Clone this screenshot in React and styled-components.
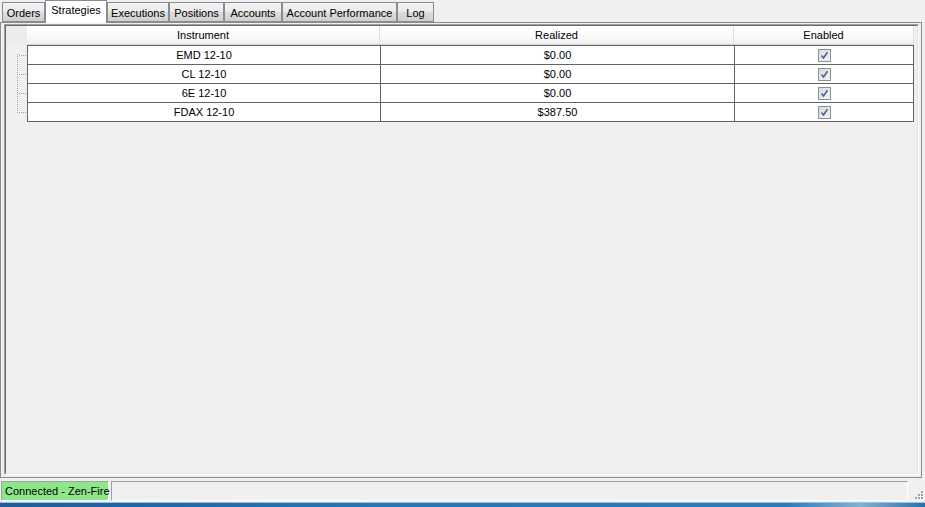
import styled, { createGlobalStyle } from "styled-components";

const GlobalStyle = createGlobalStyle`
  html, body {
    margin: 0;
    padding: 0;
    background: #f0f0f0;
  }
  body {
    font-family: "Liberation Sans", Arial, sans-serif;
    font-size: 11px;
    color: #000;
  }
`;

const strategies = [
  { id: 1, instrument: "EMD 12-10", realized: "$0.00", enabled: true },
  { id: 2, instrument: "CL 12-10", realized: "$0.00", enabled: true },
  { id: 3, instrument: "6E 12-10", realized: "$0.00", enabled: true },
  { id: 4, instrument: "FDAX 12-10", realized: "$387.50", enabled: true },
];

const tabs = [
  { label: "Orders", width: 43 },
  { label: "Strategies", width: 62, active: true },
  { label: "Executions", width: 62 },
  { label: "Positions", width: 55 },
  { label: "Accounts", width: 58 },
  { label: "Account Performance", width: 115 },
  { label: "Log", width: 37 },
];

const Window = styled.div`
  width: 925px;
  height: 507px;
  display: flex;
  flex-direction: column;
  background: #f0f0f0;
  overflow: hidden;
`;

const TabStrip = styled.div`
  height: 22px;
  display: flex;
  align-items: flex-end;
  padding-left: 2px;
  position: relative;
  z-index: 1;
`;

const Tab = styled.div`
  box-sizing: border-box;
  width: ${(p) => p.$width}px;
  height: ${(p) => (p.$active ? 23 : 20)}px;
  margin-bottom: ${(p) => (p.$active ? -1 : 0)}px;
  padding-top: ${(p) => (p.$active ? 3 : 4)}px;
  border: 1px solid #898c95;
  border-bottom: ${(p) => (p.$active ? "none" : "1px solid #898c95")};
  background: ${(p) =>
    p.$active ? "#ffffff" : "linear-gradient(#f2f2f2 0%, #ebebeb 50%, #dddddd 51%, #d0d0d0 100%)"};
  text-align: center;
  white-space: nowrap;
  line-height: 13px;
  z-index: ${(p) => (p.$active ? 2 : 1)};
`;

const Page = styled.div`
  box-sizing: border-box;
  height: 456px;
  margin-right: 3px;
  border: 1px solid #898c95;
  background: #f0f0f0;
  padding: 1px 2px 2px 3px;
  display: flex;
`;

const GridFrame = styled.div`
  flex: 1;
  box-sizing: border-box;
  border-top: 1px solid #a0a0a0;
  border-left: 1px solid #a0a0a0;
  border-right: 1px solid #ffffff;
  border-bottom: 1px solid #ffffff;
  display: flex;
`;

const Grid = styled.div`
  flex: 1;
  box-sizing: border-box;
  border-top: 1px solid #696969;
  border-left: 1px solid #696969;
  border-right: 1px solid #e3e3e3;
  border-bottom: 1px solid #e3e3e3;
  background: #f0f0f0;
`;

const HeaderRow = styled.div`
  display: grid;
  grid-template-columns: 21px 353px 354px 180px;
  height: 19px;
`;

const RowHeaderCorner = styled.div`
  background: #ececec;
`;

const HeaderCell = styled.div`
  box-sizing: border-box;
  height: 19px;
  text-align: center;
  line-height: 18px;
  border-right: 1px solid #dedede;
  border-bottom: 1px solid #d5d5d5;
  background: linear-gradient(#ffffff 0%, #fbfbfb 50%, #f1f2f3 100%);
`;

const Body = styled.div`
  display: flex;
  align-items: flex-start;
`;

const TreeGutter = styled.div`
  width: 21px;
  flex-shrink: 0;

  svg {
    display: block;
  }
`;

const Rows = styled.div`
  width: 887px;
  box-sizing: border-box;
  border-left: 1px solid #646464;
  border-right: 1px solid #646464;
  border-top: 1px solid #646464;
`;

const Row = styled.div`
  display: grid;
  grid-template-columns: 353px 354px 178px;
  height: 18px;
  border-bottom: 1px solid #646464;
  background: #ffffff;
`;

const Cell = styled.div`
  line-height: 18px;
  border-right: ${(p) => (p.$last ? "none" : "1px solid #646464")};
  display: flex;
  align-items: center;
  justify-content: center;
`;

const Check = styled.span`
  box-sizing: border-box;
  width: 13px;
  height: 13px;
  border: 1px solid #8e8f8f;
  background: linear-gradient(135deg, #d6dbe2, #f2f4f6);
  display: flex;
  align-items: center;
  justify-content: center;
`;

const StatusBar = styled.div`
  height: 20px;
  margin-top: 3px;
  display: flex;
  align-items: stretch;
  padding: 0 1px;
  gap: 2px;
`;

const StatusPanel = styled.div`
  box-sizing: border-box;
  border-top: 1px solid #a0a0a0;
  border-left: 1px solid #a0a0a0;
  border-right: 1px solid #ffffff;
  border-bottom: 1px solid #ffffff;
  background: ${(p) => (p.$green ? "#8ee68b" : "#f0f0f0")};
  padding: 3px 3px 0 3px;
  line-height: 13px;
  white-space: nowrap;
  flex: ${(p) => (p.$grow ? 1 : "none")};
  width: ${(p) => (p.$width ? `${p.$width}px` : "auto")};
`;

const Grip = styled.div`
  width: 14px;
  display: flex;
  align-items: flex-end;
  justify-content: flex-end;
`;

const Taskbar = styled.div`
  flex: 1;
  margin-top: 1px;
  background: linear-gradient(90deg, #1d5e97 0%, #2a74b4 40%, #2f7ab8 85%, #7fb3d6 93%, #2c6fa8 100%);
  border-top: 1px solid #9cc3e3;
`;

const CheckMark = () => (
  <svg width="9" height="9" viewBox="0 0 9 9">
    <path d="M1.5 4.5 L3.5 7 L7.5 1.2" fill="none" stroke="#4f6387" strokeWidth="1.6" />
  </svg>
);

// dotted tree connectors in the row-header gutter
const TreeLines = ({ count }) => {
  const rowH = 19;
  const h = count * rowH + 1;
  const dots = [];
  for (let y = 9; y <= (count - 1) * rowH + 10; y += 2) dots.push([11, y]);
  for (let i = 0; i < count; i++) {
    const y = i * rowH + 10;
    for (let x = 13; x <= 20; x += 2) dots.push([x, y]);
  }
  return (
    <svg width="21" height={h} viewBox={`0 0 21 ${h}`}>
      {dots.map(([x, y], i) => (
        <rect key={i} x={x} y={y} width="1" height="1" fill="#a0a0a0" />
      ))}
    </svg>
  );
};

const GripDots = () => (
  <svg width="12" height="12" viewBox="0 0 12 12">
    {[
      [9, 2],
      [6, 5],
      [9, 5],
      [3, 8],
      [6, 8],
      [9, 8],
    ].map(([x, y], i) => (
      <g key={i}>
        <rect x={x + 1} y={y + 1} width="2" height="2" fill="#ffffff" />
        <rect x={x} y={y} width="2" height="2" fill="#a0a0a0" />
      </g>
    ))}
  </svg>
);

const App = () => {
  return (
    <>
      <GlobalStyle />
      <Window>
        <TabStrip>
          {tabs.map((t) => (
            <Tab key={t.label} $width={t.width} $active={t.active}>
              {t.label}
            </Tab>
          ))}
        </TabStrip>
        <Page>
          <GridFrame>
            <Grid>
              <HeaderRow>
                <RowHeaderCorner />
                <HeaderCell>Instrument</HeaderCell>
                <HeaderCell>Realized</HeaderCell>
                <HeaderCell>Enabled</HeaderCell>
              </HeaderRow>
              <Body>
                <TreeGutter>
                  <TreeLines count={strategies.length} />
                </TreeGutter>
                <Rows>
                  {strategies.map((s) => (
                    <Row key={s.id}>
                      <Cell>{s.instrument}</Cell>
                      <Cell>{s.realized}</Cell>
                      <Cell $last>
                        <Check>{s.enabled && <CheckMark />}</Check>
                      </Cell>
                    </Row>
                  ))}
                </Rows>
              </Body>
            </Grid>
          </GridFrame>
        </Page>
        <StatusBar>
          <StatusPanel $green $width={108}>
            Connected - Zen-Fire
          </StatusPanel>
          <StatusPanel $grow />
          <Grip>
            <GripDots />
          </Grip>
        </StatusBar>
        <Taskbar />
      </Window>
    </>
  );
};

export default App;
